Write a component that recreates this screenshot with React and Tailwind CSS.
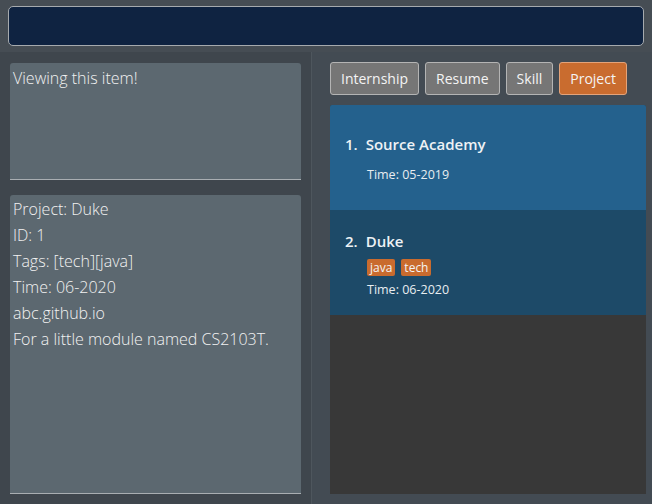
import React from 'react';

const tabs = [
  { label: 'Internship', active: false },
  { label: 'Resume', active: false },
  { label: 'Skill', active: false },
  { label: 'Project', active: true },
];

const projects = [
  { id: 1, name: 'Source Academy', tags: [], time: '05-2019', bg: 'bg-[#24618d]', pad: 'pt-[29px]' },
  { id: 2, name: 'Duke', tags: ['java', 'tech'], time: '06-2020', bg: 'bg-[#1d4a68]', pad: 'pt-[21px]' },
];

const details = [
  'Project: Duke',
  'ID: 1',
  'Tags: [tech][java]',
  'Time: 06-2020',
  'abc.github.io',
  'For a little module named CS2103T.',
];

export default function App() {
  return (
    <div className="w-[652px] h-[504px] bg-[#464d54] flex flex-col font-['Open_Sans',sans-serif] overflow-hidden">
      {/* Command box */}
      <div className="px-[8px] pt-[6px] pb-[6px] h-[52px]">
        <div className="h-[40px] rounded-[5px] border border-[#a6aaae] bg-[#0f2341]" />
      </div>

      <div className="flex flex-1 min-h-0">
        {/* Left side: result + detail */}
        <div className="w-[311px] bg-[#3f464d] flex flex-col px-[10px] pt-[11px] pb-[10px]">
          <div className="h-[117px] bg-[#5c6870] rounded-t-[3px] border-b border-[#a9aeb2] px-[3px] pt-[2px]">
            <p className="text-[16px] font-light text-[#f2f2f2] leading-[26px]">Viewing this item!</p>
          </div>
          <div className="mt-[15px] flex-1 bg-[#5c6870] rounded-t-[3px] border-b border-[#a9aeb2] px-[3px] pt-[1px]">
            {details.map((line) => (
              <p key={line} className="text-[16px] font-light text-[#f2f2f2] leading-[26px]">{line}</p>
            ))}
          </div>
        </div>

        <div className="w-px bg-[#4e565d]" />

        {/* Right side: tabs + list */}
        <div className="flex-1 bg-[#434b53] flex flex-col pl-[18px] pr-[6px] pt-[10px] pb-[10px]">
          <div className="flex gap-[6px] h-[33px]">
            {tabs.map((t) => (
              <button
                key={t.label}
                className={`px-[10px] rounded-[3px] border text-[14px] text-[#f4f4f4] ${
                  t.active ? 'bg-[#c96c2f] border-[#e3a37a]' : 'bg-[#767676] border-[#b4b4b4]'
                }`}
              >
                {t.label}
              </button>
            ))}
          </div>

          <div className="mt-[10px] flex-1 bg-[#383838] rounded-t-[2px] overflow-hidden">
            {projects.map((p) => (
              <div key={p.id} className={`${p.bg} h-[105px] flex flex-col ${p.pad} pl-[15px]`}>
                <div className="flex items-baseline text-[15px] leading-[20px] font-semibold text-[#eef2f5]">
                  <span className="mr-[8px]">{p.id}.</span>
                  <span>{p.name}</span>
                </div>
                {p.tags.length > 0 && (
                  <div className="flex gap-[6px] pl-[22px] mt-[8px]">
                    {p.tags.map((tag) => (
                      <span key={tag} className="bg-[#c96b2e] text-[#f4f4f4] text-[12px] leading-[17px] px-[3px] rounded-[2px]">
                        {tag}
                      </span>
                    ))}
                  </div>
                )}
                <div className={`pl-[22px] text-[12.5px] leading-[17px] text-[#e8edf0] ${p.tags.length ? 'mt-[5px]' : 'mt-[12px]'}`}>
                  Time: {p.time}
                </div>
              </div>
            ))}
          </div>
        </div>
      </div>
    </div>
  );
}
